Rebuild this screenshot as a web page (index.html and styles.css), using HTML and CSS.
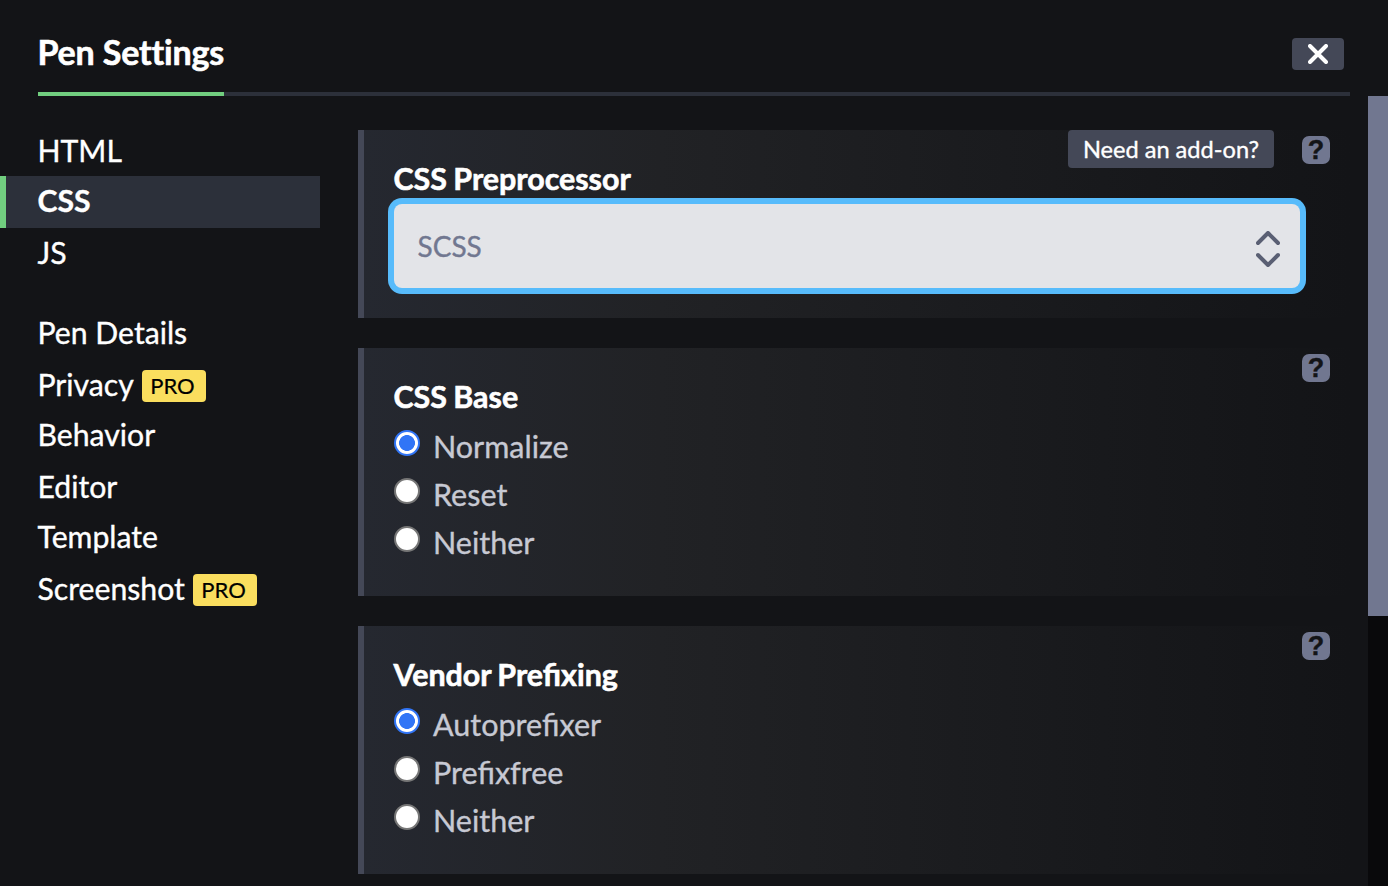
FILE: index.html
```html
<!DOCTYPE html>
<html lang="en">
<head>
<meta charset="utf-8">
<title>Pen Settings</title>
<link rel="stylesheet" href="styles.css">
</head>
<body>
<div class="modal">
  <header class="header">
    <h1 class="title">Pen Settings</h1>
    <button class="close" aria-label="Close"><svg width="20" height="20" viewBox="0 0 20 20"><path d="M2 2 18 18M18 2 2 18"/></svg></button>
  </header>
  <div class="body">
    <nav class="sidebar">
      <a class="item">HTML</a>
      <a class="item active">CSS</a>
      <a class="item">JS</a>
      <a class="item gap">Pen Details</a>
      <a class="item">Privacy<span class="pro">PRO</span></a>
      <a class="item short">Behavior</a>
      <a class="item">Editor</a>
      <a class="item short">Template</a>
      <a class="item">Screenshot<span class="pro">PRO</span></a>
    </nav>
    <main class="panels">
      <section class="panel first">
        <h2 class="heading">CSS Preprocessor</h2>
        <div class="select"><span>SCSS</span><svg width="24" height="36" viewBox="0 0 24 36"><path d="M2 12 12 2 22 12M2 24 12 34 22 24"/></svg></div>
        <div class="tools"><button class="addon">Need an add-on?</button><span class="help">?</span></div>
      </section>
      <section class="panel">
        <h2 class="heading">CSS Base</h2>
        <label class="option"><i class="radio on"></i>Normalize</label>
        <label class="option"><i class="radio"></i>Reset</label>
        <label class="option"><i class="radio"></i>Neither</label>
        <div class="tools"><span class="help">?</span></div>
      </section>
      <section class="panel">
        <h2 class="heading">Vendor Prefixing</h2>
        <label class="option"><i class="radio on"></i>Autoprefixer</label>
        <label class="option"><i class="radio"></i>Prefixfree</label>
        <label class="option"><i class="radio"></i>Neither</label>
        <div class="tools"><span class="help">?</span></div>
      </section>
    </main>
    <div class="scrollbar"><div class="thumb"></div></div>
  </div>
</div>
</body>
</html>
```
FILE: styles.css
```css
* { box-sizing: border-box; }
body { margin: 0; background: #131417; color: #fff; font-family: Lato, sans-serif; font-size: 30.2px; overflow: hidden; -webkit-text-stroke: 0.35px; }
button { border: 0; font: inherit; color: inherit; }
.modal { display: flex; flex-direction: column; height: 886px; }
.header { display: flex; justify-content: space-between; align-items: flex-start; height: 96px; margin: 0 38px; border-bottom: 4px solid #2c303a; padding-right: 6px; }
.title { width: 186px; margin: 0; height: 96px; padding-top: 30px; border-bottom: 4px solid #71ce7f; font-size: 34px; line-height: 43px; font-weight: 700; letter-spacing: -0.15px; text-indent: -0.5px; white-space: nowrap; -webkit-text-stroke: 0.6px; }
.close { display: grid; place-items: center; width: 52px; height: 32px; margin-top: 38px; padding: 0; border-radius: 4px; background: #444857; }
.close path { stroke: #fff; stroke-width: 4; stroke-linecap: round; }
.body { display: flex; flex: 1; min-height: 0; }
.sidebar { width: 320px; padding-top: 30px; display: flex; flex-direction: column; }
.item { display: flex; align-items: center; flex: none; height: 52px; padding: 0 0 4px 37.5px; line-height: 36px; }
.item:first-child { height: 50px; padding-bottom: 2px; }
.item.short { height: 50px; padding-bottom: 6px; }
.item.gap { margin-top: 28px; }
.item.active { background: #2c303a; box-shadow: inset 6px 0 #71ce7f; font-weight: 700; }
.pro { display: grid; place-items: center; width: 64px; height: 32px; margin: 4px 0 0 7.7px; padding-right: 2px; border-radius: 4px; background: #fade5e; color: #000; font-size: 22px; line-height: 32px; -webkit-text-stroke: 0.2px; }
.panels { display: flex; flex-direction: column; gap: 30px; width: 992px; margin-left: 38px; padding-top: 34px; }
.panel { position: relative; flex: none; height: 248px; padding: 29px 50px 0 30px; border-left: 6px solid #444857; background: linear-gradient(90deg, #252830, #212225 30%, #131417); }
.panel.first { height: 188px; }
.heading { margin: 0 0 7px; font-size: 30.4px; line-height: 38px; font-weight: 700; text-indent: -0.5px; word-spacing: -1px; -webkit-text-stroke: 0.6px; }
.select { display: flex; justify-content: space-between; align-items: center; height: 84px; padding: 0 20px 0 23.5px; border-radius: 8px; background: #e3e4e8; box-shadow: 0 0 0 6px #57bbfb; color: #717790; font-size: 28px; }
.select span { padding-bottom: 1px; }
.select svg { margin-top: 6px; }
.select path { fill: none; stroke: #5a5f73; stroke-width: 4; stroke-linecap: round; stroke-linejoin: round; }
.tools { position: absolute; top: 0; right: 20px; display: flex; gap: 28px; }
.addon { height: 38px; width: 206px; padding: 0; border-radius: 4px; background: #444857; font-size: 23.6px; line-height: 38px; }
.help { display: grid; place-items: center; width: 28px; height: 28px; margin-top: 6px; border-radius: 7px; background: #717790; color: #131417; font: 700 27px/29px "Liberation Sans", sans-serif; }
.option { display: flex; height: 48px; line-height: 48px; color: #c7c9d3; font-size: 30.5px; }
.radio { width: 26px; height: 26px; margin: 8px 13px 0 0; border-radius: 50%; background: #fff; border: 2px solid #767676; }
.radio.on { border-color: #3175f6; background: radial-gradient(circle, #3175f6 7.6px, #fff 8.2px); }
.scrollbar { width: 20px; margin-left: auto; background: #09090b; }
.thumb { height: 520px; background: #717790; }
```
